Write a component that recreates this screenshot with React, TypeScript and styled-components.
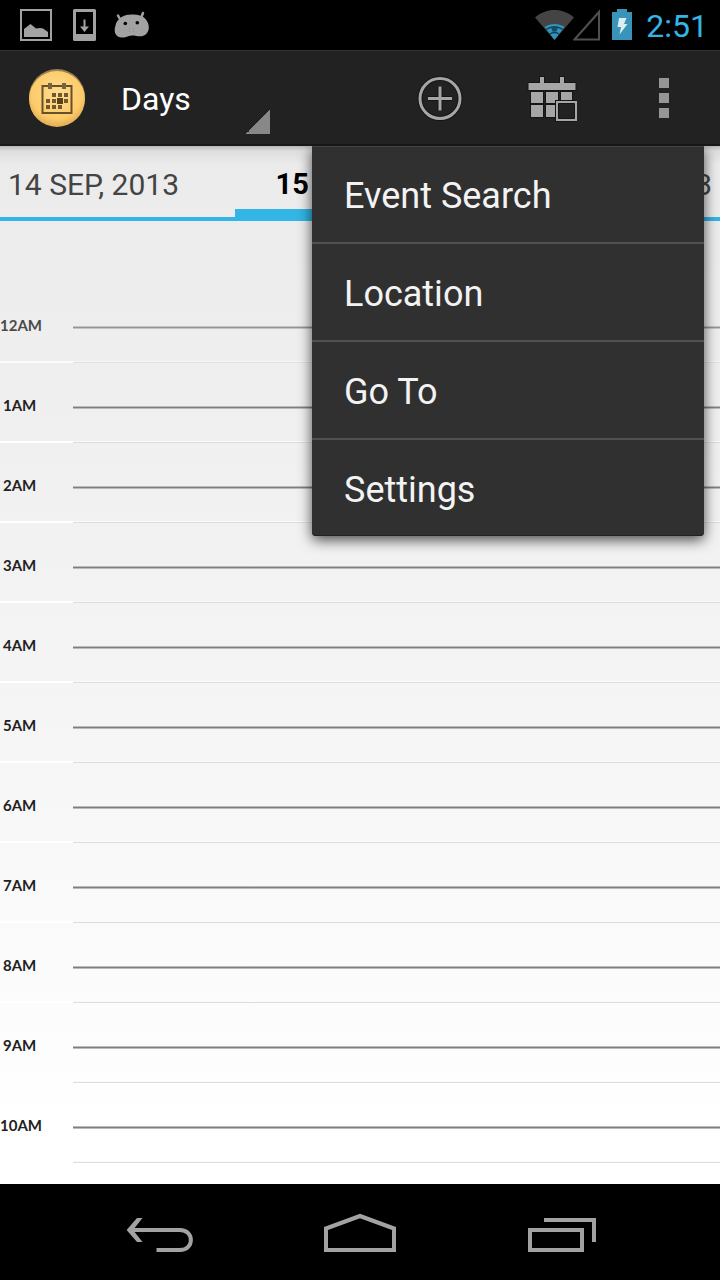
import React from "react";
import styled, { createGlobalStyle } from "styled-components";

const GlobalStyle = createGlobalStyle`
  *, *::before, *::after { box-sizing: border-box; }
  body { margin: 0; background: #000; font-family: Roboto, "Liberation Sans", sans-serif; }
  button, select { margin: 0; padding: 0; border: 0; background: none; color: inherit; font: inherit; }
  svg { display: block; flex: none; }
`;

const Screen = styled.div`
  display: flex;
  flex-direction: column;
  min-height: 100vh;
`;

const StatusBar = styled.div`
  display: flex;
  align-items: center;
  justify-content: space-between;
  height: 50px;
  padding: 0 12px 0 20px;
  background: #000;
`;

const StatusGroup = styled.div<{ $gap: number }>`
  display: flex;
  align-items: center;
  gap: ${(p) => p.$gap}px;
`;

const PowerGroup = styled(StatusGroup)`
  margin-left: 11px;
`;

const Clock = styled.time`
  color: #33b5e5;
  font-size: 32px;
  line-height: 50px;
  padding-top: 2px;
`;

const ActionBar = styled.header`
  position: relative;
  z-index: 2;
  display: flex;
  align-items: center;
  height: 96px;
  padding-left: 28px;
  background: #222;
  border-top: 1px solid #333;
  border-bottom: 2px solid #171717;
`;

const ViewSelect = styled.select`
  appearance: none;
  align-self: stretch;
  width: 157px;
  margin-left: 28px;
  padding-left: 8px;
  padding-top: 2px;
  color: #fff;
  font-size: 32px;
  background: linear-gradient(135deg, transparent 50%, #888 50%) right bottom 10px / 24px 24px no-repeat;
  outline: none;
`;

const Actions = styled.div`
  display: flex;
  margin-left: auto;
`;

const ActionButton = styled.button`
  display: flex;
  align-items: center;
  justify-content: center;
  width: 112px;
  height: 93px;
`;

const Menu = styled.ul`
  position: absolute;
  top: calc(100% + 2px);
  right: 16px;
  width: 392px;
  margin: 0;
  padding: 0;
  list-style: none;
  background: #303030;
  border-radius: 0 0 4px 4px;
  box-shadow: 0 4px 14px rgba(0, 0, 0, 0.7), inset 0 1px 0 #444, inset 0 -1px 0 #222;
  clip-path: inset(0 -20px -24px -20px);
`;

const MenuItem = styled.li`
  & + & { border-top: 2px solid #505050; }
`;

const MenuButton = styled.button`
  display: block;
  width: 100%;
  height: 96px;
  padding: 4px 32px 0;
  color: #f3f3f3;
  font-size: 36px;
  text-align: left;
`;

const Content = styled.main`
  display: flex;
  flex: 1;
  flex-direction: column;
  overflow: hidden;
  background:
    linear-gradient(rgba(0, 0, 0, 0.22), rgba(0, 0, 0, 0.06) 5px, transparent 18px),
    linear-gradient(#ebebeb, #f3f3f3 45%, #fff 95%);
`;

const DateTabs = styled.nav`
  display: grid;
  grid-template-columns: 1fr 250px 1fr;
  height: 75px;
  border-bottom: 4px solid #33b5e5;
`;

const DateTab = styled.button<{ $align: string; $current?: boolean }>`
  height: ${(p) => (p.$current ? 75 : 71)}px;
  padding: ${(p) => (p.$current ? 14 : 6)}px 8px 0;
  color: ${(p) => (p.$current ? "#000" : "#444")};
  font-size: ${(p) => (p.$current ? 29 : 30)}px;
  font-weight: ${(p) => (p.$current ? 700 : 400)};
  line-height: 35px;
  text-align: ${(p) => p.$align};
  white-space: nowrap;
  border-bottom: ${(p) => (p.$current ? "12px solid #33b5e5" : "0")};
`;

const Hours = styled.ol`
  margin: 0;
  padding: 62px 0 0;
  list-style: none;
`;

const HourRow = styled.li<{ $faded: boolean }>`
  display: grid;
  grid-template-columns: 73px 1fr;
  height: 80px;
  opacity: ${(p) => (p.$faded ? 0.8 : 1)};
`;

const HourLabel = styled.span<{ $wide: boolean }>`
  display: block;
  padding-top: 33px;
  padding-left: ${(p) => (p.$wide ? 0 : 3)}px;
  color: #222;
  font: 700 15px/18px Lato, "Open Sans", sans-serif;
  border-bottom: 2px solid #fff;
`;

const Slot = styled.div`
  display: flex;
  flex-direction: column;
  justify-content: flex-end;
  border-bottom: 1px solid #ddd;
`;

const HourLine = styled.div`
  height: 3px;
  background: #7f7f7f;
  border: 1px solid #bbb;
  border-width: 1px 0;
`;

const HalfHour = styled.div`
  height: 33px;
  border-bottom: 1px solid #fafafa;
`;

const NavBar = styled.nav`
  display: flex;
  justify-content: center;
  height: 96px;
  background: #000;
`;

const NavButton = styled.button`
  display: flex;
  align-items: center;
  justify-content: center;
  width: 200px;
`;

const PictureIcon = () => (
  <svg width="32" height="32" viewBox="0 0 32 32" fill="#a2a2a2" aria-hidden="true">
    <path d="M0 0h32v32H0zM2 2v28h28V2z" fillRule="evenodd" />
    <path d="M4 28v-8l6.500-5 5.500 4.500 4-0.500 3 0.500 5 3.500v5z" />
  </svg>
);

const DownloadIcon = () => (
  <svg width="26" height="32" viewBox="0 0 26 32" fill="#a2a2a2" aria-hidden="true">
    <path d="M4.500 0h20a1.500 1.500 0 0 1 1.500 1.500v29a1.500 1.500 0 0 1-1.500 1.500h-20A1.500 1.500 0 0 1 3 30.500v-29A1.500 1.500 0 0 1 4.500 0zM6 3v22h17V3z" fillRule="evenodd" />
    <path d="M13.500 10.500h2v7h3.500l-4.500 5.500-4.500-5.500h3.500z" />
  </svg>
);

const DroidIcon = () => (
  <svg width="36" height="32" viewBox="0 0 36 32" aria-hidden="true">
    <path d="M4 6.500L6.500 11M29 4L27 9" stroke="#a2a2a2" strokeWidth="2.500" strokeLinecap="round" />
    <path d="M6 9.500C9 6 14 5.500 19 5.500C25 5.500 29 7 31.500 10C36 15 36 23 31 26C27 28.500 23 26.500 18 26.500C13 27 12 29 7.500 28.500C1 28-0.500 22 1.500 16.500C2 13 4 11 6 9.500z" fill="#a2a2a2" />
    <circle cx="11.300" cy="14.500" r="1.800" />
    <circle cx="23.300" cy="13.700" r="1.800" />
    <path d="M15 19.500h1M19 19.500h1M15 22h1M19 22h1" stroke="#888" />
  </svg>
);

const WifiIcon = () => (
  <svg width="38" height="32" viewBox="0 0 38 32" overflow="visible" aria-hidden="true">
    <path d="M0 8.500C11-1.500 28-1.500 39 8.500L19.500 31z" fill="#444" />
    <path d="M9.500 18C15 14 24 14 29.500 18L19.500 31z" fill="#2f93be" />
    <path d="M11 20.500C16 17 23 17 28 20.500M15 25C17.500 23 21.500 23 24 25" fill="none" stroke="#123f54" strokeWidth="1.500" />
    <path d="M16 17.500h7l-1.500 5h-4z" fill="#17495f" />
  </svg>
);

const SignalIcon = () => (
  <svg width="28" height="32" viewBox="0 0 28 32" aria-hidden="true">
    <path d="M1.500 30.500L26 3v27.500z" fill="none" stroke="#505050" strokeWidth="2" />
  </svg>
);

const BatteryIcon = () => (
  <svg width="20" height="32" viewBox="0 0 20 32" aria-hidden="true">
    <path d="M5 0h10v3h5v28H0V3h5z" fill="#3994b9" />
    <path d="M7 9h7.500l-2.500 6h3.500L7.500 25.500l1.500-7.500H5.500z" fill="#dcecf3" />
  </svg>
);

const AppIcon = () => (
  <svg width="57" height="60" viewBox="0 0 57 60" aria-hidden="true">
    <defs>
      <radialGradient id="gold" cx="50%" cy="40%" r="60%">
        <stop offset="0" stopColor="#ffdc91" />
        <stop offset="0.750" stopColor="#fdcb69" />
        <stop offset="1" stopColor="#dfac55" />
      </radialGradient>
    </defs>
    <circle cx="29" cy="29" r="28" fill="#9b8253" />
    <circle cx="29" cy="31" r="28" fill="url(#gold)" />
    <rect x="14.500" y="18" width="29" height="27" fill="none" stroke="#66512b" strokeWidth="2" />
    <path d="M20 15h4v6h-4zM34 15h4v6h-4z" fill="#75643f" />
    <path d="M24 25h4v4h-4zM30 25h4v4h-4zM36 25h4v4h-4zM18 31h4v4h-4zM24 31h4v4h-4zM36 31h4v4h-4zM18 37h4v4h-4zM24 37h4v4h-4zM30 37h4v4h-4z" fill="#72592d" />
    <path d="M29 30h6v6h-6z" fill="#584219" />
  </svg>
);

const AddIcon = () => (
  <svg width="48" height="48" viewBox="0 0 48 48" fill="none" aria-hidden="true">
    <g stroke="#151515" strokeWidth="5"><circle cx="24" cy="24.500" r="20" /><path d="M12 24.500h24M24 12.500v24" /></g>
    <g stroke="#a6a6a6" strokeWidth="3"><circle cx="24" cy="24.500" r="20" /><path d="M12 24.500h24M24 12.500v24" /></g>
  </svg>
);

const TodayIcon = () => (
  <svg width="50" height="48" viewBox="0 0 50 48" aria-hidden="true">
    <g fill="#a6a6a6" stroke="#151515" strokeWidth="2" paintOrder="stroke">
      <path d="M1.500 9H13V3h4v6h16V3h4v6h11.500v7h-47z" />
      <path d="M4 18h12v11H4zM19 18h12v11H19zM34 18h11v11H34zM4 31h12v12H4zM19 31h12v12H19z" />
      <path d="M29 27h21v20H29z" />
    </g>
    <path d="M31.500 29.500h16v15h-16z" fill="#222" stroke="#151515" />
  </svg>
);

const OverflowIcon = () => (
  <svg width="10" height="40" viewBox="0 0 10 40" fill="#969696" aria-hidden="true">
    <path d="M0 0h10v10H0zM0 15h10v10H0zM0 30h10v10H0z" />
  </svg>
);

const BackIcon = () => (
  <svg width="80" height="48" viewBox="0 0 80 48" fill="none" stroke="#a2a2a2" strokeWidth="4" aria-hidden="true">
    <path d="M10 22h50c14.500 0 14.500 20 0 20H36.500" />
    <path d="M17 10h5.500L13 22l9.500 12H17L7 22.500v-1z" fill="#a2a2a2" stroke="none" />
  </svg>
);

const HomeIcon = () => (
  <svg width="80" height="48" viewBox="0 0 80 48" fill="none" stroke="#a2a2a2" strokeWidth="4" aria-hidden="true">
    <path d="M6 42V20.500L40 8l34 12.500V42z" />
  </svg>
);

const RecentIcon = () => (
  <svg width="80" height="48" viewBox="0 0 80 48" fill="none" stroke="#a2a2a2" strokeWidth="4" aria-hidden="true">
    <path d="M10 22h52v20H10zM24 12h50v22" />
  </svg>
);

const menuItems = ["Event Search", "Location", "Go To", "Settings"];
const hours = ["12AM", "1AM", "2AM", "3AM", "4AM", "5AM", "6AM", "7AM", "8AM", "9AM", "10AM"];

export default function App() {
  return (
    <>
      <GlobalStyle />
      <Screen>
        <StatusBar>
          <StatusGroup $gap={18}>
            <PictureIcon />
            <DownloadIcon />
            <DroidIcon />
          </StatusGroup>
          <StatusGroup $gap={0}>
            <WifiIcon />
            <SignalIcon />
            <PowerGroup $gap={14}>
              <BatteryIcon />
              <Clock>2:51</Clock>
            </PowerGroup>
          </StatusGroup>
        </StatusBar>
        <ActionBar>
          <AppIcon />
          <ViewSelect aria-label="Calendar view" defaultValue="Days">
            <option>Days</option>
          </ViewSelect>
          <Actions>
            <ActionButton aria-label="New event"><AddIcon /></ActionButton>
            <ActionButton aria-label="Today"><TodayIcon /></ActionButton>
            <ActionButton aria-label="More options" aria-expanded="true"><OverflowIcon /></ActionButton>
          </Actions>
          <Menu>
            {menuItems.map((item) => (
              <MenuItem key={item}><MenuButton>{item}</MenuButton></MenuItem>
            ))}
          </Menu>
        </ActionBar>
        <Content>
          <DateTabs>
            <DateTab $align="left">14 SEP, 2013</DateTab>
            <DateTab $align="center" $current>15 SEP, 2013</DateTab>
            <DateTab $align="right">16 SEP, 2013</DateTab>
          </DateTabs>
          <Hours>
            {hours.map((hour, i) => (
              <HourRow key={hour} $faded={i === 0}>
                <HourLabel $wide={hour.length > 3}>{hour}</HourLabel>
                <Slot>
                  <HourLine />
                  <HalfHour />
                </Slot>
              </HourRow>
            ))}
          </Hours>
        </Content>
        <NavBar>
          <NavButton aria-label="Back"><BackIcon /></NavButton>
          <NavButton aria-label="Home"><HomeIcon /></NavButton>
          <NavButton aria-label="Recent apps"><RecentIcon /></NavButton>
        </NavBar>
      </Screen>
    </>
  );
}
